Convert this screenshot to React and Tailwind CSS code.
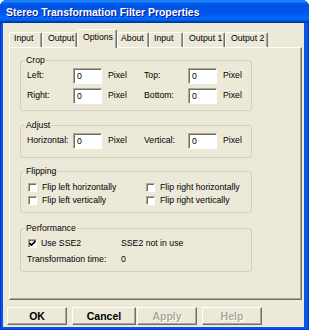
import React from "react";

const raised =
  "border border-t-white border-l-white border-r-[#716F64] border-b-[#716F64] shadow-[inset_-1px_-1px_#ACA899]";
const sunken =
  "border border-t-[#ACA899] border-l-[#ACA899] border-r-white border-b-white shadow-[inset_1px_1px_#716F64]";

function Input() {
  return (
    <div className={`w-[29px] h-[16px] bg-white ${sunken} pl-[3px] flex items-center leading-[12px]`}>0</div>
  );
}

function Check({ checked }) {
  return (
    <div className={`w-[9px] h-[9px] bg-white ${sunken} shrink-0 flex items-center justify-center`}>
      {checked && (
        <svg width="7" height="7" viewBox="0 0 7 7" className="block">
          <path d="M0.5 3 L2.5 5 L6.5 1" stroke="#000" strokeWidth="1.6" fill="none" />
        </svg>
      )}
    </div>
  );
}

function Group({ title, className, children }) {
  return (
    <div className={`relative w-[232px] border border-[#D0D0BF] rounded-[3px] ${className}`}>
      <span className="absolute -top-[7px] left-[4px] px-[1px] bg-[#ECE9D8] leading-[12px]">{title}</span>
      {children}
    </div>
  );
}

function Tab({ label, sel, w, pl }) {
  if (sel) {
    return (
      <div
        className={`relative z-10 h-[19px] -mb-[1px] ${w} ${pl} pt-[1px] leading-[12px] bg-[#ECE9D8] border-l border-t border-r border-l-white border-t-white border-r-[#716F64] rounded-t-[2px] shadow-[inset_-1px_0_#ACA899]`}
      >
        {label}
      </div>
    );
  }
  return (
    <div
      className={`h-[15px] ${w} ${pl} leading-[11px] bg-[#ECE9D8] border-l border-t border-r border-l-white border-t-white border-r-[#716F64] rounded-t-[2px] shadow-[inset_-1px_0_#ACA899]`}
    >
      {label}
    </div>
  );
}

function Row({ l1, l2 }) {
  return (
    <div className="flex items-center h-[16px]">
      <span className="w-[46px]">{l1}</span>
      <Input />
      <span className="ml-[6px] w-[36px]">Pixel</span>
      <span className="w-[44px]">{l2}</span>
      <Input />
      <span className="ml-[6px]">Pixel</span>
    </div>
  );
}

function Button({ label, w, disabled }) {
  return (
    <div
      className={`h-[18px] ${w} ${raised} bg-[#ECE9D8] flex items-center justify-center font-bold text-[10.5px] leading-[12px] ${
        disabled ? "text-[#ACA899] [text-shadow:1px_1px_#ffffff]" : "text-black"
      }`}
    >
      {label}
    </div>
  );
}

export default function App() {
  return (
    <div className="w-[309px] h-[330px] bg-white font-['Liberation_Sans',Arial,sans-serif] text-[8.7px] text-black">
      <div className="w-[309px] h-[330px] flex flex-col rounded-t-[7px] overflow-hidden bg-[#0856E6] shadow-[inset_1px_0_#0831D9,inset_-1px_0_#0831D9,inset_0_-1px_#0831D9]">
        <div className="h-[23px] shrink-0 flex items-center pl-[6px] pt-[2px] bg-[linear-gradient(to_bottom,#0058EE_0%,#3593FF_4%,#288EFF_6%,#127DFF_8%,#036FFC_10%,#0262EE_14%,#0057E5_20%,#0054E3_24%,#0055EB_56%,#005BF5_66%,#026AFE_76%,#0062EF_86%,#0052D6_92%,#0040AB_94%,#003092_100%)]">
          <span className="text-white font-bold text-[10.4px] leading-[13px] [text-shadow:1px_1px_#0F1089]">
            Stereo Transformation Filter Properties
          </span>
        </div>
        <div className="flex-1 ml-[3px] mr-[5px] mb-[3px] bg-[#ECE9D8] flex flex-col pt-[6px]">
          <div className="ml-[6px] h-[18px] flex items-end relative z-10">
            <Tab label="Input" w="w-[33px]" pl="pl-[4px]" />
            <Tab label="Output" w="w-[35px]" pl="pl-[5px]" />
            <Tab label="Options" sel w="w-[40px]" pl="pl-[5px]" />
            <Tab label="About" w="w-[32px]" pl="pl-[3px]" />
            <Tab label="Input" w="w-[34px]" pl="pl-[4px]" />
            <Tab label="Output 1" w="w-[42px]" pl="pl-[5px]" />
            <Tab label="Output 2" w="w-[43px]" pl="pl-[5px]" />
          </div>
          <div className={`ml-[6px] w-[293px] h-[253px] ${raised} pl-[10px] pt-[12px] flex flex-col`}>
            <Group title="Crop" className="pl-[6px] pt-[7px] pb-[6px] flex flex-col gap-[4px]">
              <Row l1="Left:" l2="Top:" />
              <Row l1="Right:" l2="Bottom:" />
            </Group>
            <Group title="Adjust" className="mt-[14px] pl-[6px] pt-[7px] pb-[8px]">
              <Row l1="Horizontal:" l2="Vertical:" />
            </Group>
            <Group title="Flipping" className="mt-[13px] pl-[7px] pt-[9px] pb-[5px]">
              <div className="grid grid-cols-[118px_1fr] leading-[13px]">
                <div className="flex items-center h-[13px]">
                  <Check />
                  <span className="ml-[5px]">Flip left horizontally</span>
                </div>
                <div className="flex items-center h-[13px]">
                  <Check />
                  <span className="ml-[5px]">Flip right horizontally</span>
                </div>
                <div className="flex items-center h-[13px]">
                  <Check />
                  <span className="ml-[5px]">Flip left vertically</span>
                </div>
                <div className="flex items-center h-[13px]">
                  <Check />
                  <span className="ml-[5px]">Flip right vertically</span>
                </div>
              </div>
            </Group>
            <Group title="Performance" className="mt-[15px] pl-[6px] pt-[8px] pb-[5px]">
              <div className="grid grid-cols-[94px_1fr] gap-y-[3px] leading-[13px]">
                <div className="flex items-center h-[13px] pl-[1px]">
                  <Check checked />
                  <span className="ml-[4px]">Use SSE2</span>
                </div>
                <div className="flex items-center h-[13px]">SSE2 not in use</div>
                <div className="flex items-center h-[13px]">Transformation time:</div>
                <div className="flex items-center h-[13px]">0</div>
              </div>
            </Group>
          </div>
          <div className="flex mt-[7px] pl-[4px]">
            <Button label="OK" w="w-[60px]" />
            <div className="ml-[5px]">
              <Button label="Cancel" w="w-[64px]" />
            </div>
            <div className="ml-[1px]">
              <Button label="Apply" w="w-[60px]" disabled />
            </div>
            <div className="ml-[5px]">
              <Button label="Help" w="w-[60px]" disabled />
            </div>
          </div>
        </div>
      </div>
    </div>
  );
}
